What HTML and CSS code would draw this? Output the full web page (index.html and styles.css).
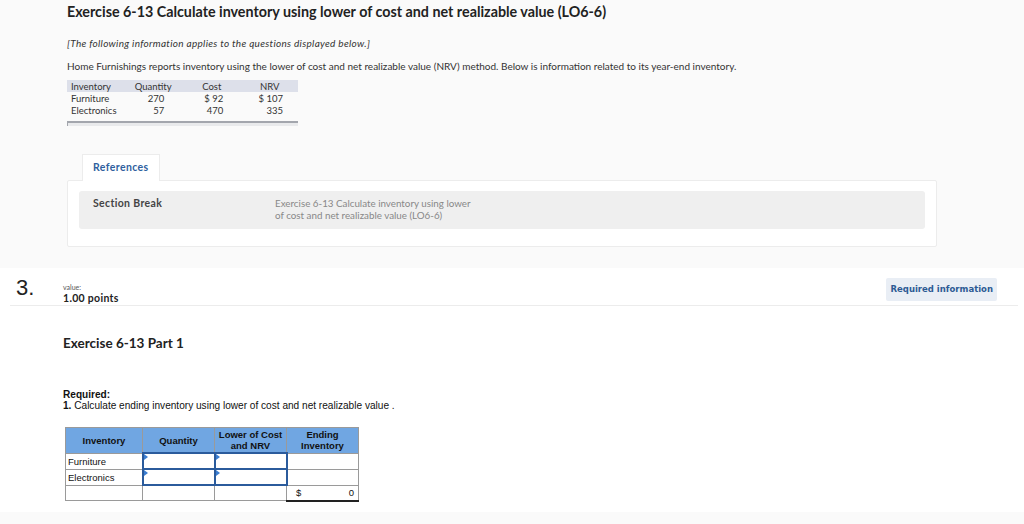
FILE: index.html
```html
<!DOCTYPE html>
<html>
<head>
<meta charset="utf-8">
<link rel="stylesheet" href="styles.css">
</head>
<body>
<div class="top">
  <h1 class="title">Exercise 6-13 Calculate inventory using lower of cost and net realizable value (LO6-6)</h1>
  <p class="note">[The following information applies to the questions displayed below.]</p>
  <p class="intro">Home Furnishings reports inventory using the lower of cost and net realizable value (NRV) method. Below is information related to its year-end inventory.</p>
  <div class="datawrap">
    <table class="data">
      <thead>
        <tr><th class="c1">Inventory</th><th class="c2">Quantity</th><th class="c3">Cost</th><th class="c4">NRV</th></tr>
      </thead>
      <tbody>
        <tr><td class="c1">Furniture</td><td class="c2">270</td><td class="c3">$ 92</td><td class="c4">$ 107</td></tr>
        <tr><td class="c1">Electronics</td><td class="c2">57</td><td class="c3">470</td><td class="c4">335</td></tr>
      </tbody>
    </table>
    <div class="scrollbar"></div>
  </div>
  <div class="refs">
    <div class="tab">References</div>
    <div class="panel">
      <div class="break">
        <div class="break-label">Section Break</div>
        <div class="break-text">Exercise 6-13 Calculate inventory using lower<br>of cost and net realizable value (LO6-6)</div>
      </div>
    </div>
  </div>
</div>
<div class="question">
  <div class="qhead">
    <div class="qnum">3.</div>
    <div class="qvalue">
      <div class="vlabel">value:</div>
      <div class="vpoints">1.00 points</div>
    </div>
    <div class="reqbtn">Required information</div>
  </div>
  <div class="qbody">
    <h2 class="part">Exercise 6-13 Part 1</h2>
    <div class="required">
      <div class="req-title">Required:</div>
      <div class="req-text"><b>1.</b> Calculate ending inventory using lower of cost and net realizable value .</div>
    </div>
    <table class="answer">
      <thead>
        <tr><th>Inventory</th><th>Quantity</th><th>Lower of Cost<br>and NRV</th><th>Ending<br>Inventory</th></tr>
      </thead>
      <tbody>
        <tr><td class="lbl">Furniture</td><td class="inp"><span class="flag"></span></td><td class="inp"><span class="flag"></span></td><td></td></tr>
        <tr><td class="lbl">Electronics</td><td class="inp"><span class="flag"></span></td><td class="inp"><span class="flag"></span></td><td></td></tr>
        <tr><td></td><td></td><td></td><td class="total"><span>$</span><span>0</span></td></tr>
      </tbody>
    </table>
  </div>
</div>
<div class="footer"></div>
</body>
</html>
```
FILE: styles.css
```css
html, body {
  margin: 0;
  padding: 0;
  background: #ffffff;
}
body {
  font-family: "Lato", "Liberation Sans", sans-serif;
  color: #333;
}
.top {
  background: #fafafa;
  height: 268px;
  padding: 0 0 0 67px;
  box-sizing: border-box;
  overflow: hidden;
}
.title {
  margin: 0;
  padding-top: 3px;
  font-size: 14.3px;
  font-weight: 700;
  color: #222;
  line-height: 18px;
}
.note {
  margin: 16px 0 0;
  font-size: 10px;
  font-style: italic;
  letter-spacing: 0.3px;
  line-height: 12px;
  color: #333;
}
.intro {
  margin: 11px 0 0;
  font-size: 10px;
  line-height: 12px;
  color: #333;
}
.datawrap {
  margin-top: 8px;
  width: 231px;
}
.data {
  border-collapse: collapse;
  width: 231px;
  font-size: 9.5px;
  color: #333;
}
.data th, .data td {
  padding: 0;
  height: 12px;
  line-height: 11px;
  font-weight: 400;
}
.data thead tr {
  background: #dde0ea;
}
.data th { text-align: center; }
.data th.c1, .data td.c1 { text-align: left; padding-left: 4px; width: 58px; }
.data .c2 { width: 54px; }
.data .c3 { width: 57px; }
.data .c4 { width: 58px; }
.data td.c2 { text-align: right; padding-right: 18px; }
.data td.c3 { text-align: right; padding-right: 18px; }
.data td.c4 { text-align: right; padding-right: 15px; }
.scrollbar {
  margin-top: 5px;
  height: 3px;
  border-top: 2px solid #a3a6ad;
  border-left: 1px solid #a3a6ad;
  background: #e9eaec;
}
.refs {
  margin-top: 28px;
  width: 870px;
}
.tab {
  margin-left: 15px;
  width: 78px;
  height: 27px;
  box-sizing: border-box;
  background: #fff;
  border: 1px solid #ececec;
  border-bottom: none;
  font-size: 10.5px;
  letter-spacing: 0.4px;
  font-weight: 700;
  color: #2f5f9e;
  padding: 6px 0 0 10px;
  position: relative;
  z-index: 1;
  margin-bottom: -1px;
}
.panel {
  background: #fff;
  border: 1px solid #ececec;
  border-radius: 2px;
  height: 67px;
  box-sizing: border-box;
  padding: 10px 11px 0 11px;
}
.break {
  background: #efefef;
  border-radius: 3px;
  height: 38px;
  display: flex;
  padding: 6px 0 0 14px;
  box-sizing: border-box;
}
.break-label {
  width: 182px;
  font-size: 10.5px;
  letter-spacing: 0.35px;
  font-weight: 700;
  color: #444;
  line-height: 12px;
}
.break-text {
  font-size: 9.8px;
  color: #888;
  line-height: 12px;
}
.question {
  background: #fff;
  height: 244px;
}
.qhead {
  margin: 0 6px 0 10px;
  height: 38px;
  box-sizing: border-box;
  border-bottom: 1px solid #ececec;
  display: flex;
  align-items: flex-start;
}
.qnum {
  font-family: "Liberation Sans", Arial, sans-serif;
  font-size: 22px;
  color: #222;
  padding: 8px 0 0 6px;
  width: 47px;
  line-height: 24px;
}
.qvalue {
  padding-top: 15px;
}
.vlabel {
  font-size: 7px;
  color: #555;
  line-height: 9px;
}
.vpoints {
  font-size: 10.5px;
  letter-spacing: 0.3px;
  font-weight: 700;
  color: #222;
  line-height: 12px;
}
.reqbtn {
  margin-left: auto;
  margin-right: 21px;
  margin-top: 10px;
  background: #e9eef5;
  border-radius: 2px;
  font-family: "DejaVu Sans", Verdana, sans-serif;
  font-size: 8.5px;
  font-weight: 700;
  color: #2d5a94;
  padding: 6px 4px;
  line-height: 11px;
}
.qbody {
  padding-left: 63px;
}
.part {
  margin: 29px 0 0;
  font-size: 13.5px;
  font-weight: 700;
  color: #222;
  line-height: 16px;
}
.required {
  margin-top: 38px;
  font-family: "Liberation Sans", Arial, sans-serif;
  font-size: 10.1px;
  line-height: 11px;
  color: #111;
}
.req-title { font-weight: 700; }
.answer {
  margin-top: 16px;
  margin-left: 2px;
  border-collapse: collapse;
  font-family: "Liberation Sans", Arial, sans-serif;
  font-size: 9.5px;
  color: #111;
}
.answer th {
  background: #70a6e2;
  border: 1px solid #9a9a9a;
  font-weight: 700;
  height: 24px;
  line-height: 11px;
  padding: 0;
  width: 71px;
}
.answer th:first-child { width: 76px; }
.answer td {
  border: 1px solid #9a9a9a;
  height: 14px;
  padding: 0;
  background: #fff;
}
.answer td.lbl {
  padding-left: 2px;
  text-align: left;
}
.answer td.inp {
  border: 2px solid #2b5b9c;
  position: relative;
}
.flag {
  position: absolute;
  left: 0;
  top: 0;
  width: 0;
  height: 0;
  border-top: 3px solid transparent;
  border-bottom: 3px solid transparent;
  border-left: 4px solid #3a7dd1;
}
.answer td.total {
  border-bottom: 2px solid #222;
}
.total {
  padding: 0 4px 0 9px !important;
}
.total span:first-child { float: left; }
.total span:last-child { float: right; }
.footer {
  background: #fafafa;
  height: 12px;
}
```
